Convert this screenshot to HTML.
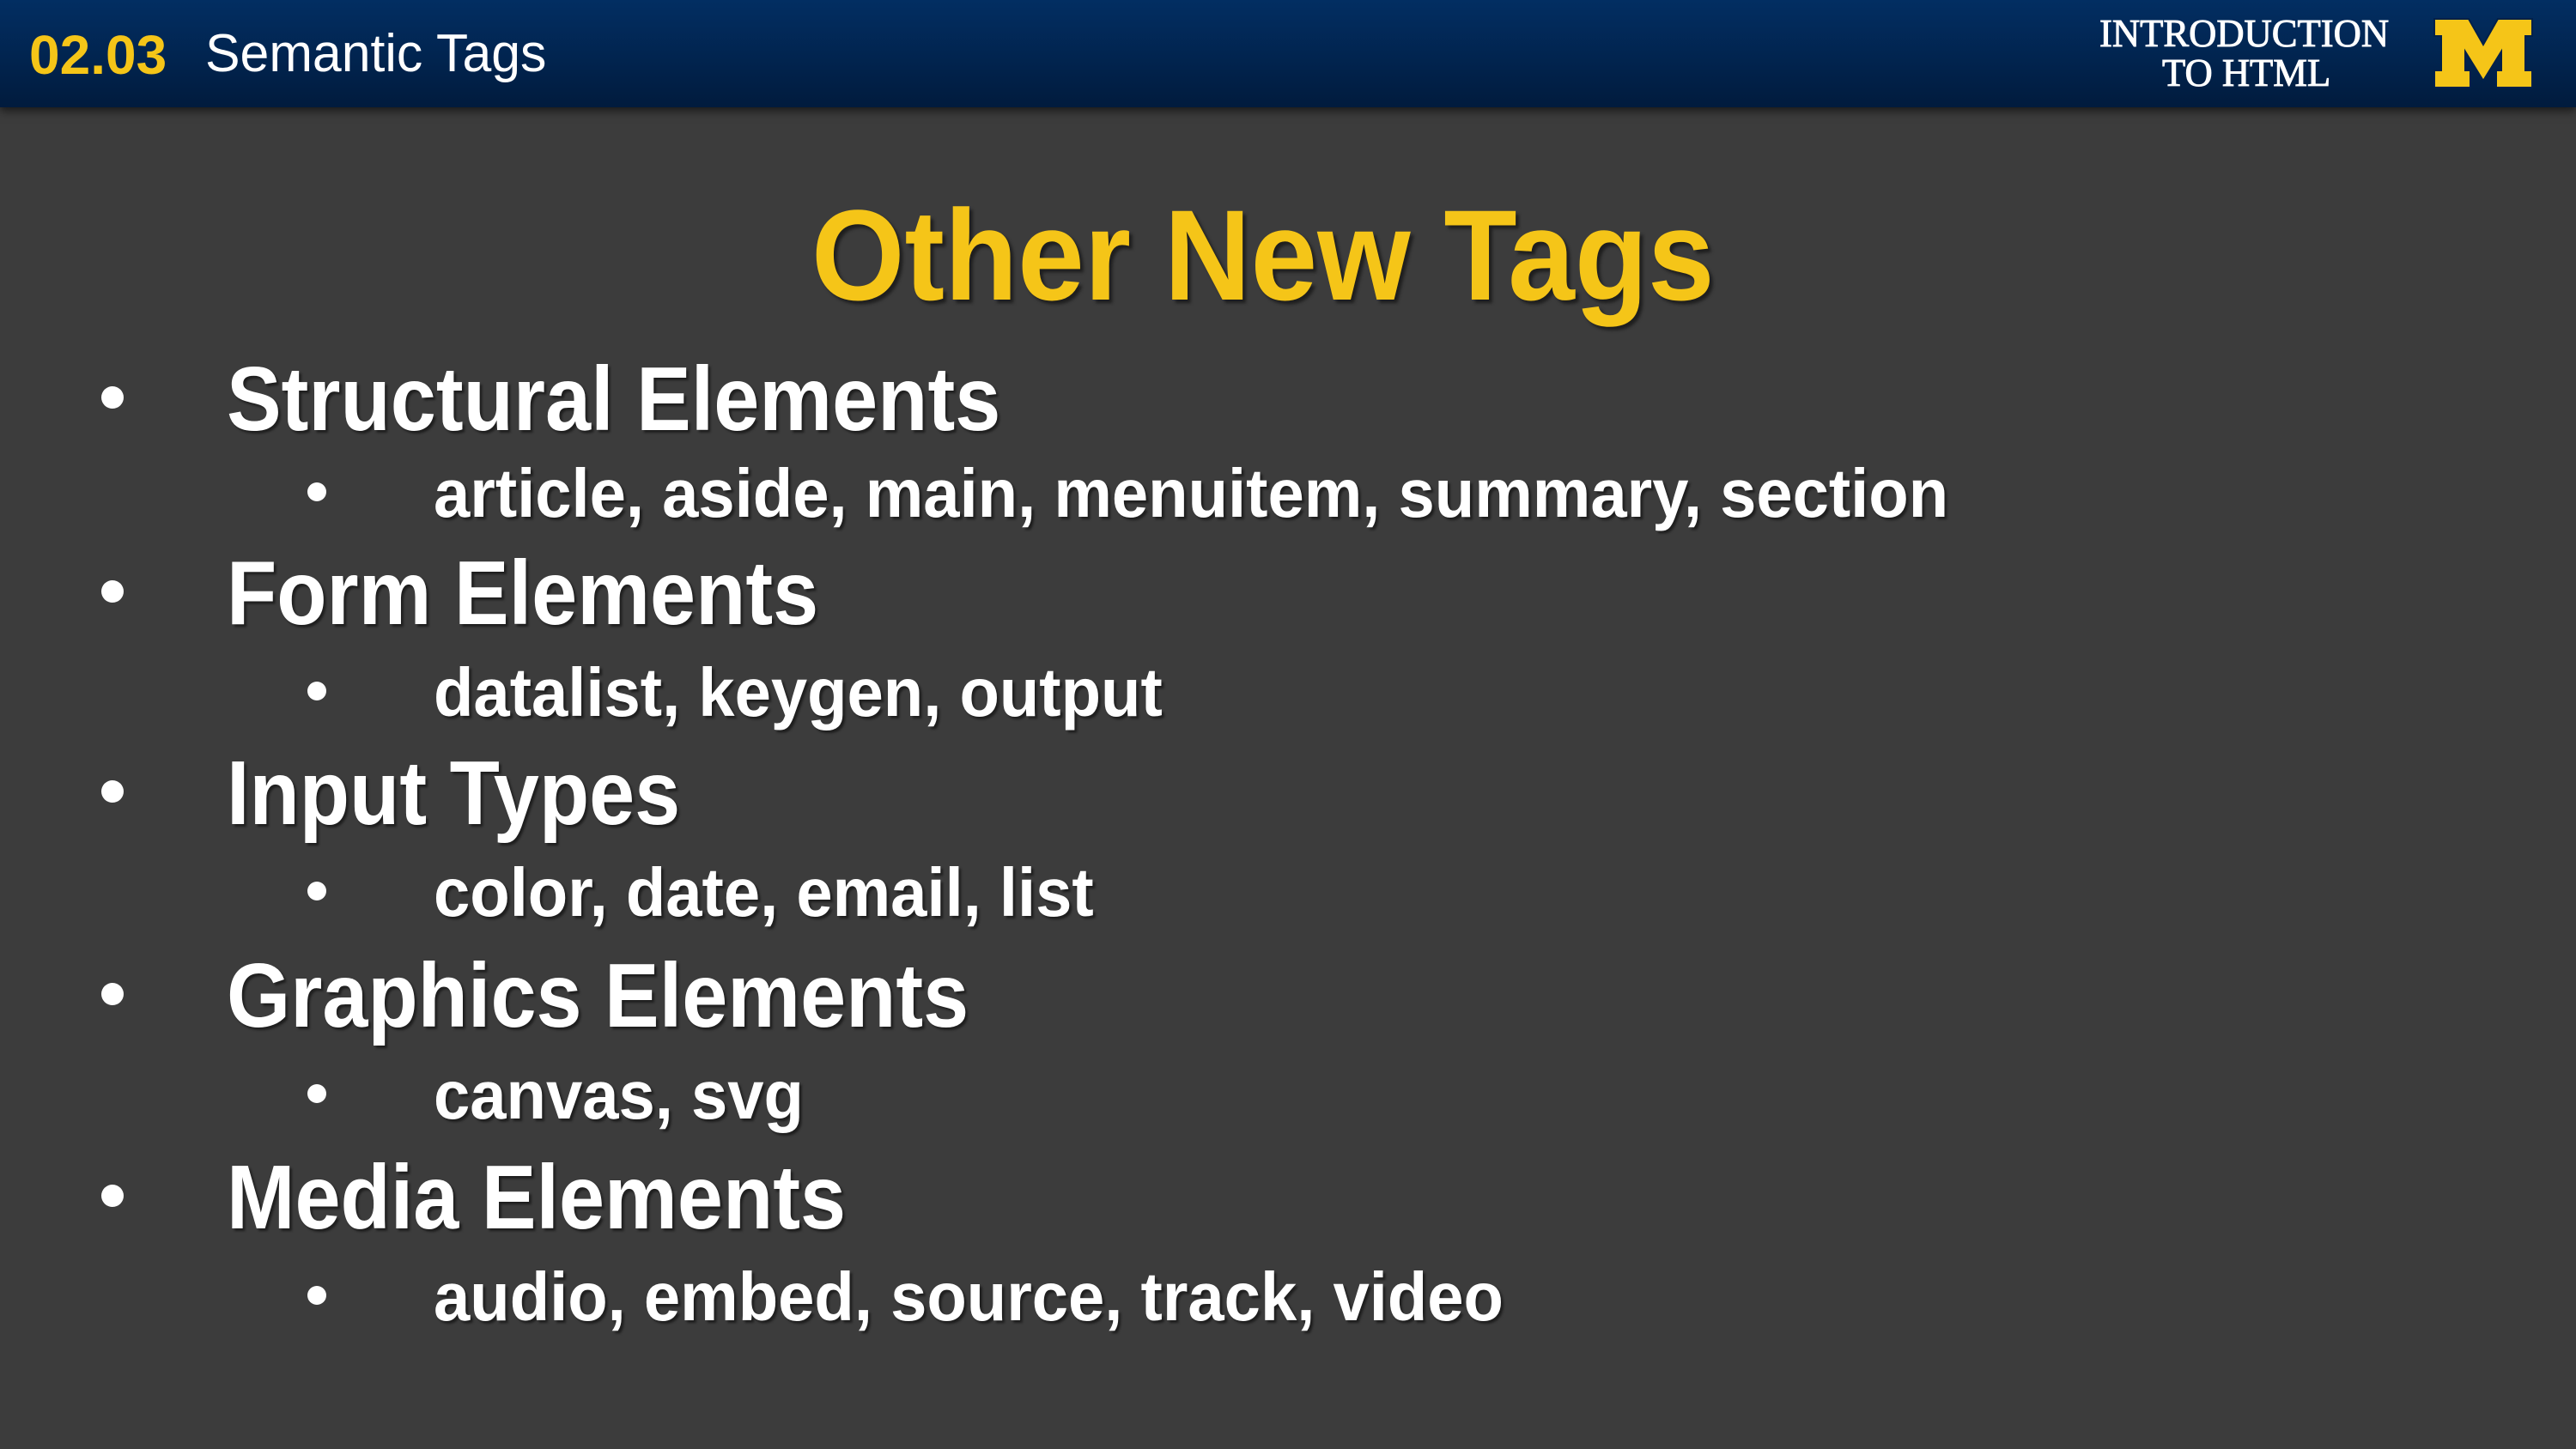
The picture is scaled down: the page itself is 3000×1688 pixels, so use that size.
<!DOCTYPE html>
<html><head><meta charset="utf-8"><style>
*{margin:0;padding:0}
body{width:3000px;height:1688px;overflow:hidden;background:#3c3c3c;position:relative;font-family:"Liberation Sans",sans-serif}
.hdr{position:absolute;left:0;top:0;width:3000px;height:125px;background:linear-gradient(#022e62,#01234d 60%,#011b3d);box-shadow:0 4px 10px rgba(0,0,0,.6)}
.t{position:absolute;white-space:nowrap;transform-origin:0 0;line-height:1}
.w{color:#fff;font-weight:bold;text-shadow:3px 3px 3px rgba(0,0,0,.5)}
.b{position:absolute;width:26px;height:26px;border-radius:50%;background:#fff}
.b2{width:22px;height:22px}
.l1{font-size:106px;transform:scaleX(.9)}
.l2{font-size:80px;transform:scaleX(.95)}
</style></head><body>
<div class="hdr"></div>
<div class="t" style="left:34px;top:32px;font-size:64px;font-weight:bold;color:#f5c518;transform:scaleX(1.0)">02.03</div>
<div class="t" style="left:239px;top:32px;font-size:62px;color:#fff;transform:scaleX(.98)">Semantic Tags</div>
<div class="t" style="left:2445px;top:16px;font-family:'Liberation Serif',serif;font-size:46px;color:#fff;-webkit-text-stroke:1px #fff;transform:scaleX(.97)">INTRODUCTION</div>
<div class="t" style="left:2518px;top:62px;font-family:'Liberation Serif',serif;font-size:46px;color:#fff;-webkit-text-stroke:1px #fff;transform:scaleX(.97)">TO HTML</div>
<svg style="position:absolute;left:2833px;top:20px" width="118" height="84" viewBox="0 0 118 84"><path d="M2 2H42L59 32L76 2H116V22H108V62H116V82H74V62H80V40L59 74L38 40V62H44V82H2V62H10V22H2Z" fill="#f5c518" stroke="#00204a" stroke-width="2"/></svg>

<div class="t" style="left:945px;top:222px;font-size:150px;font-weight:bold;color:#f5c518;text-shadow:4px 4px 4px rgba(0,0,0,.5);transform:scaleX(.93)">Other New Tags</div>

<div class="b" style="left:118px;top:450px"></div>
<div class="t w l1" style="left:264px;top:412px">Structural Elements</div>
<div class="b b2" style="left:358px;top:562px"></div>
<div class="t w l2" style="left:505px;top:535px">article, aside, main, menuitem, summary, section</div>

<div class="b" style="left:118px;top:676px"></div>
<div class="t w l1" style="left:264px;top:638px">Form Elements</div>
<div class="b b2" style="left:358px;top:794px"></div>
<div class="t w l2" style="left:505px;top:767px">datalist, keygen, output</div>

<div class="b" style="left:118px;top:909px"></div>
<div class="t w l1" style="left:264px;top:871px">Input Types</div>
<div class="b b2" style="left:358px;top:1027px"></div>
<div class="t w l2" style="left:505px;top:1000px">color, date, email, list</div>

<div class="b" style="left:118px;top:1145px"></div>
<div class="t w l1" style="left:264px;top:1107px">Graphics Elements</div>
<div class="b b2" style="left:358px;top:1263px"></div>
<div class="t w l2" style="left:505px;top:1236px">canvas, svg</div>

<div class="b" style="left:118px;top:1380px"></div>
<div class="t w l1" style="left:264px;top:1342px">Media Elements</div>
<div class="b b2" style="left:358px;top:1498px"></div>
<div class="t w l2" style="left:505px;top:1471px">audio, embed, source, track, video</div>
</body></html>
